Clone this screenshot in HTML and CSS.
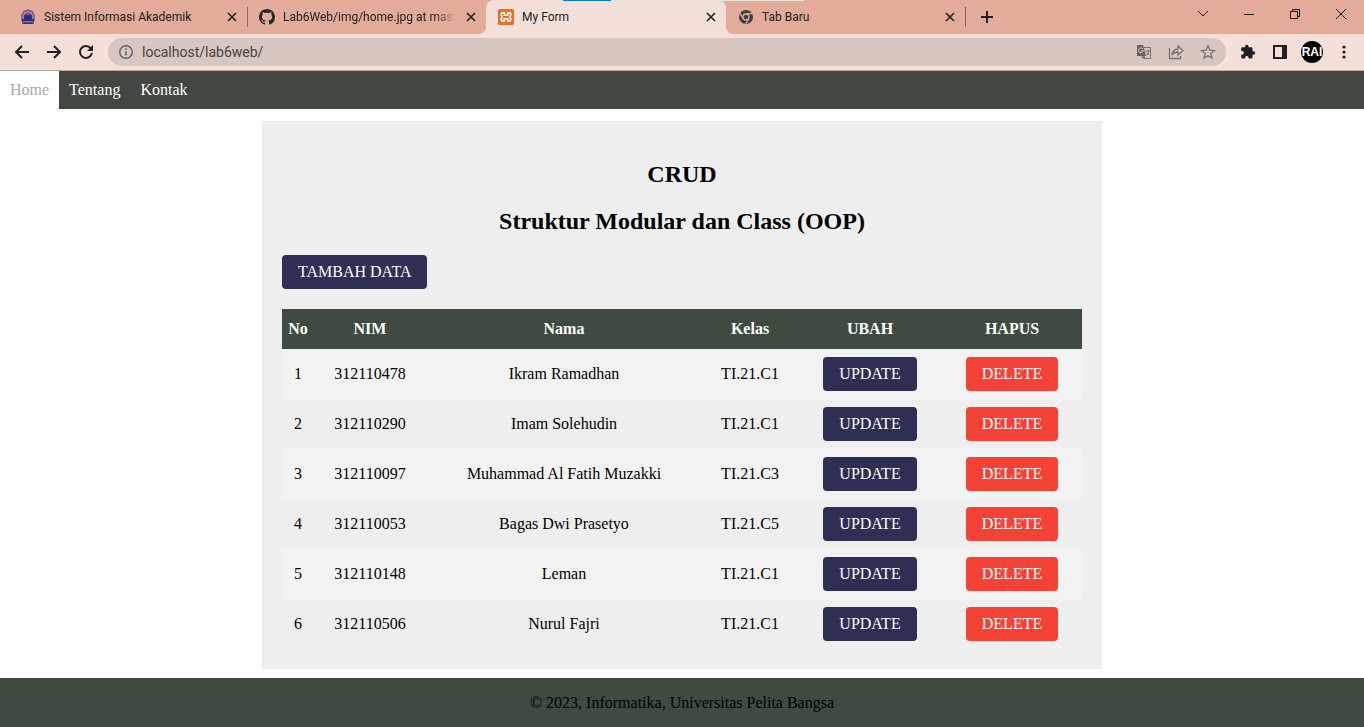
FILE: index.html
```
<!DOCTYPE html>
<html lang="id">
<head>
<meta charset="utf-8">
<meta name="viewport" content="width=device-width, initial-scale=1">
<title>My Form</title>
<link rel="stylesheet" href="styles.css">
</head>
<body>
<div class="browser">
  <div class="tab-strip">
    <div class="tab">
      <svg class="favicon" viewBox="0 0 16 16" aria-hidden="true"><path d="M8 .8L10 1.800l2.200.4.8 2 1.400 1.800-.6 2.200.6 2.300H1.600l.6-2.300L1.600 6 3 4.200l.8-2L6 1.800z" fill="#a58292" stroke="#51457c" stroke-width="1"/><path d="M1.500 10h13l-1 5h-11z" fill="#2c2f7d"/><path d="M8 3.500l4 3v5H4v-5z" fill="#2c2f8a"/><path d="M8 3.200l1.400 2.600H6.600z" fill="#e8553f"/><path d="M3 13.200q2.500-1.300 5 0q2.500-1.300 5 0" stroke="#d9b0b5" fill="none" stroke-width=".8"/></svg>
      <span class="tab-title">Sistem Informasi Akademik</span>
      <button class="tab-close" aria-label="Tutup tab"><svg viewBox="0 0 16 16"><path d="M4 4l8 8M12 4l-8 8"/></svg></button>
    </div>
    <div class="tab divided">
      <svg class="favicon" viewBox="0 0 16 16" aria-hidden="true"><path fill="#24292f" fill-rule="evenodd" d="M8 0C3.580 0 0 3.580 0 8c0 3.540 2.290 6.530 5.470 7.590.4.070.55-.17.55-.38 0-.19-.01-.82-.01-1.490-2.010.37-2.530-.49-2.690-.94-.09-.23-.48-.94-.82-1.130-.28-.15-.68-.52-.01-.53.63-.01 1.080.58 1.230.82.72 1.210 1.870.87 2.330.66.07-.52.28-.87.51-1.070-1.780-.2-3.640-.89-3.640-3.950 0-.87.31-1.590.82-2.150-.08-.2-.36-1.020.08-2.120 0 0 .67-.21 2.200.82.64-.18 1.320-.27 2-.27s1.360.09 2 .27c1.530-1.040 2.200-.82 2.200-.82.44 1.100.16 1.920.08 2.120.51.56.82 1.270.82 2.150 0 3.070-1.870 3.750-3.650 3.950.29.25.54.73.54 1.480 0 1.070-.01 1.930-.01 2.200 0 .21.15.46.55.38A8.010 8.010 0 0 0 16 8c0-4.420-3.580-8-8-8z"/></svg>
      <span class="tab-title faded">Lab6Web/img/home.jpg at maste</span>
      <button class="tab-close" aria-label="Tutup tab"><svg viewBox="0 0 16 16"><path d="M4 4l8 8M12 4l-8 8"/></svg></button>
    </div>
    <div class="tab active">
      <svg class="favicon" viewBox="0 0 16 16" aria-hidden="true"><rect width="16" height="16" rx="1.500" fill="#e8701f"/><path d="M6.300 3.800H4.800Q3.200 3.800 3.200 5.400Q3.200 7 4.400 8Q3.200 9 3.200 10.600Q3.200 12.200 4.800 12.200H6.300V9.800H9.700V12.200H11.200Q12.800 12.200 12.800 10.600Q12.800 9 11.600 8Q12.800 7 12.800 5.400Q12.800 3.800 11.200 3.800H9.700V6.200H6.300z" fill="none" stroke="#fff" stroke-width="1.600" stroke-linejoin="round"/></svg>
      <span class="tab-title">My Form</span>
      <button class="tab-close" aria-label="Tutup tab"><svg viewBox="0 0 16 16"><path d="M4 4l8 8M12 4l-8 8"/></svg></button>
    </div>
    <div class="tab">
      <svg class="favicon" viewBox="0 0 16 16" aria-hidden="true"><circle cx="8" cy="8" r="7" fill="#3c4043"/><circle cx="8" cy="8" r="3" fill="#3c4043" stroke="#e3ab99" stroke-width="1.300"/><path d="M8 4.700h6.500M5.100 9.600L2 4.100M10.900 9.600L7.700 15" stroke="#e3ab99" stroke-width="1.200"/></svg>
      <span class="tab-title">Tab Baru</span>
      <button class="tab-close" aria-label="Tutup tab"><svg viewBox="0 0 16 16"><path d="M4 4l8 8M12 4l-8 8"/></svg></button>
    </div>
    <button class="new-tab" aria-label="Tab baru"><svg viewBox="0 0 16 16"><path d="M8 2v12M2 8h12"/></svg></button>
    <div class="window-controls">
      <button aria-label="Cari tab"><svg viewBox="0 0 16 16"><path d="M3 5l5 5 5-5"/></svg></button>
      <button aria-label="Minimalkan"><svg viewBox="0 0 16 16"><path d="M3 8.500h10"/></svg></button>
      <button aria-label="Pulihkan"><svg viewBox="0 0 16 16"><path d="M3.500 5.500h7v7h-7zM5.500 5.500v-2h7v7h-2"/></svg></button>
      <button aria-label="Tutup"><svg viewBox="0 0 16 16"><path d="M3 3l10 10M13 3L3 13"/></svg></button>
    </div>
    <div class="share-indicator"></div>
  </div>
  <div class="toolbar">
    <button class="tool" aria-label="Kembali"><svg viewBox="0 0 16 16"><path class="stroke" d="M15 8H2M8 2L2 8l6 6"/></svg></button>
    <button class="tool" aria-label="Maju"><svg viewBox="0 0 16 16"><path class="stroke" d="M1 8h13M8 2l6 6-6 6"/></svg></button>
    <button class="tool" aria-label="Muat ulang"><svg viewBox="0 0 16 16"><path class="stroke" d="M13 4.600A6 6 0 1 0 13.900 9"/><path d="M15 1v6H9z"/></svg></button>
    <div class="omnibox">
      <svg class="info" viewBox="0 0 16 16" aria-hidden="true"><circle cx="8" cy="8" r="6.300"/><path d="M8 7.200v4.300M8 4.300v1.600"/></svg>
      <input class="address" type="text" aria-label="Alamat" value="localhost/lab6web/">
      <div class="omnibox-actions">
        <button class="tool muted" aria-label="Terjemahkan"><svg viewBox="0 0 16 16"><path d="M7.500 3.500h7v11h-5.500l-1.500-3" fill="none" stroke="#77706d"/><path d="M1 1h6l3 11H1z" fill="#68625f"/><path d="M9 12.500H5l3.500 3z" fill="#68625f"/><path d="M6.800 4.800A2.400 2.400 0 1 0 7.300 6.700H5" fill="none" stroke="#d8c7c0"/><path d="M9.500 7h4.500M11.700 5.700V7M13 7q-.8 3-2.700 4.300M10.700 8.500l2.500 3" fill="none" stroke="#77706d"/></svg></button>
        <button class="tool muted" aria-label="Bagikan"><svg viewBox="0 0 16 16"><path class="thin" d="M1.500 4v10.500h11V12M4 11q.5-5.500 6-6V2l5 4.500-5 4.500V8q-4 0-6 3z"/></svg></button>
        <button class="tool muted" aria-label="Markahi"><svg viewBox="0 0 16 16"><path class="thin" d="M8 1.800l1.800 4.300 4.700.4-3.600 3 1.100 4.600L8 11.700l-4 2.400 1.100-4.600-3.600-3 4.700-.4z"/></svg></button>
      </div>
    </div>
    <button class="tool" aria-label="Ekstensi"><svg viewBox="0 0 16 16"><path d="M13.500 7.300h-1V4.500q0-1.300-1.300-1.300H8.500v-.7a1.700 1.700 0 0 0-3.400 0v.7H2.400q-1.200 0-1.200 1.300V7h.8a1.800 1.800 0 0 1 0 3.700h-.8v2.600q0 1.300 1.200 1.300H5v-.8a1.800 1.800 0 0 1 3.600 0v.8h2.600q1.300 0 1.300-1.300v-2.600h1a1.700 1.700 0 0 0 0-3.400z"/></svg></button>
    <button class="tool" aria-label="Panel samping"><svg viewBox="0 0 16 16"><path fill-rule="evenodd" d="M1 1h14v14H1zM3 3v10h7V3z"/></svg></button>
    <button class="tool" aria-label="Profil"><span class="avatar">RAI</span></button>
    <button class="tool" aria-label="Menu"><svg viewBox="0 0 16 16"><circle cx="8" cy="3" r="1.600"/><circle cx="8" cy="8" r="1.600"/><circle cx="8" cy="13" r="1.600"/></svg></button>
  </div>
</div>

<nav class="site-nav">
  <a class="current" href="#home">Home</a>
  <a href="#tentang">Tentang</a>
  <a href="#kontak">Kontak</a>
</nav>

<main class="content">
  <h2>CRUD</h2>
  <h2>Struktur Modular dan Class (OOP)</h2>
  <button class="btn">TAMBAH DATA</button>
  <table class="students">
    <thead>
      <tr><th class="col-no">No</th><th class="col-nim">NIM</th><th class="col-name">Nama</th><th class="col-class">Kelas</th><th class="col-edit">UBAH</th><th class="col-delete">HAPUS</th></tr>
    </thead>
    <tbody>
      <tr><td>1</td><td>312110478</td><td>Ikram Ramadhan</td><td>TI.21.C1</td><td><button class="btn">UPDATE</button></td><td><button class="btn danger">DELETE</button></td></tr>
      <tr><td>2</td><td>312110290</td><td>Imam Solehudin</td><td>TI.21.C1</td><td><button class="btn">UPDATE</button></td><td><button class="btn danger">DELETE</button></td></tr>
      <tr><td>3</td><td>312110097</td><td>Muhammad Al Fatih Muzakki</td><td>TI.21.C3</td><td><button class="btn">UPDATE</button></td><td><button class="btn danger">DELETE</button></td></tr>
      <tr><td>4</td><td>312110053</td><td>Bagas Dwi Prasetyo</td><td>TI.21.C5</td><td><button class="btn">UPDATE</button></td><td><button class="btn danger">DELETE</button></td></tr>
      <tr><td>5</td><td>312110148</td><td>Leman</td><td>TI.21.C1</td><td><button class="btn">UPDATE</button></td><td><button class="btn danger">DELETE</button></td></tr>
      <tr><td>6</td><td>312110506</td><td>Nurul Fajri</td><td>TI.21.C1</td><td><button class="btn">UPDATE</button></td><td><button class="btn danger">DELETE</button></td></tr>
    </tbody>
  </table>
</main>

<footer class="site-footer">© 2023, Informatika, Universitas Pelita Bangsa</footer>
</body>
</html>
```
FILE: styles.css
```
* { box-sizing: border-box; }

body {
  margin: 0;
  background: #fff;
  color: #000;
  font: 16px/18px "Liberation Serif", "Times New Roman", serif;
}

button {
  margin: 0;
  padding: 0;
  border: 0;
  background: none;
  color: inherit;
  font: inherit;
  cursor: pointer;
}

/* Browser frame */
.browser {
  color: #202124;
  font: 12px/16px Roboto, "Noto Sans", sans-serif;
}

.tab-strip {
  position: relative;
  display: flex;
  height: 34px;
  padding-left: 8px;
  background: #e3ab99;
}

.tab {
  position: relative;
  display: flex;
  flex: 0 1 239px;
  align-items: center;
  gap: 8px;
  min-width: 0;
  padding: 0 7px 0 12px;
}

.tab.divided::before,
.new-tab::before {
  content: "";
  position: absolute;
  top: 7px;
  left: 0;
  width: 1px;
  height: 20px;
  background: #8d6a5f;
}

.tab.active {
  flex-basis: 240px;
  border-radius: 8px 8px 0 0;
  background: #f5e0d9;
}

.tab.active::before,
.tab.active::after {
  content: "";
  position: absolute;
  bottom: 0;
  width: 8px;
  height: 8px;
}

.tab.active::before {
  right: 100%;
  background: radial-gradient(circle at 0 0, transparent 8px, #f5e0d9 8px);
}

.tab.active::after {
  left: 100%;
  background: radial-gradient(circle at 100% 0, transparent 8px, #f5e0d9 8px);
}

.favicon {
  flex: none;
  width: 16px;
  height: 16px;
}

.tab-title {
  flex: 1;
  min-width: 0;
  white-space: nowrap;
}

.tab-title.faded {
  -webkit-mask-image: linear-gradient(to right, #000 88%, transparent);
  mask-image: linear-gradient(to right, #000 88%, transparent);
}

.tab-close,
.tab-close svg {
  display: block;
  flex: none;
  width: 16px;
  height: 16px;
}

.tab-close svg,
.new-tab svg {
  fill: none;
  stroke: #202124;
  stroke-width: 2;
}

.tab-close svg { stroke-width: 1.600; }

.new-tab {
  position: relative;
  flex: none;
  width: 44px;
}

.new-tab svg {
  display: block;
  width: 16px;
  height: 16px;
  margin: 0 auto;
}

.window-controls {
  display: flex;
  margin-left: auto;
}

.window-controls button {
  width: 46px;
  padding-bottom: 6px;
}

.window-controls svg {
  display: block;
  width: 16px;
  height: 16px;
  margin: 0 auto;
  fill: none;
  stroke: #111;
  stroke-width: 1;
}

.share-indicator {
  position: absolute;
  top: 0;
  left: 563px;
  width: 241px;
  height: 1px;
  background: linear-gradient(to right, #0078d7 48px, #e6e3e1 48px);
}

.toolbar {
  display: flex;
  align-items: center;
  height: 37px;
  padding: 0 4px 0 6px;
  border-bottom: 1px solid #b9aaa4;
  background: #f5e0d9;
}

.tool {
  display: flex;
  flex: none;
  align-items: center;
  justify-content: center;
  width: 32px;
  height: 28px;
}

.tool svg {
  width: 16px;
  height: 16px;
  fill: #202124;
}

.tool .stroke {
  fill: none;
  stroke: #202124;
  stroke-width: 2;
}

.muted .thin {
  fill: none;
  stroke: #77706d;
  stroke-width: 1.300;
}

.omnibox {
  display: flex;
  flex: 1;
  align-items: center;
  gap: 8px;
  height: 28px;
  margin: 0 6px;
  padding: 0 2px 0 10px;
  border-radius: 14px;
  background: #d8c7c0;
}

.info {
  flex: none;
  width: 16px;
  height: 16px;
  fill: none;
  stroke: #5f6368;
  stroke-width: 1.500;
}

.address {
  flex: 1;
  min-width: 0;
  padding: 0;
  border: 0;
  outline: 0;
  background: none;
  color: #47423f;
  font: 14px/20px Roboto, "Noto Sans", sans-serif;
}

.omnibox-actions { display: flex; }

.avatar {
  display: flex;
  align-items: center;
  justify-content: center;
  width: 22px;
  height: 22px;
  overflow: hidden;
  border-radius: 50%;
  background: #000;
  color: #fff;
  font: bold 12px/22px "Liberation Sans", Arial, sans-serif;
}

/* Site */
.site-nav {
  display: flex;
  background: #424741;
}

.site-nav a {
  padding: 10px;
  color: #fff;
  text-decoration: none;
}

.site-nav .current {
  background: #fff;
  color: #a8a8a8;
}

.content {
  max-width: 840px;
  margin: 12px auto 9px;
  padding: 20px;
  background: #eee;
}

.content h2 {
  margin: 20px 0;
  font-size: 24px;
  line-height: 27px;
  text-align: center;
}

.btn {
  display: block;
  padding: 8px 16px;
  border-radius: 4px;
  background: #2f2e54;
  color: #fff;
}

.btn.danger { background: #f44336; }

.students {
  width: 100%;
  margin-top: 20px;
  border-collapse: collapse;
  table-layout: fixed;
  text-align: center;
}

.students th {
  padding: 11px 0;
  background: #3f4a40;
  color: #fff;
}

.students td { padding: 8px 0; }

.students td .btn { margin: 0 auto; }

.students tbody tr:nth-child(odd) { background: #f2f2f2; }

.col-no { width: 4%; }
.col-nim { width: 14%; }
.col-name { width: 34.5%; }
.col-class { width: 12%; }
.col-edit { width: 18%; }
.col-delete { width: 17.5%; }

.site-footer {
  padding: 16px 20px 15px;
  background: #3f4a40;
  text-align: center;
}
```
